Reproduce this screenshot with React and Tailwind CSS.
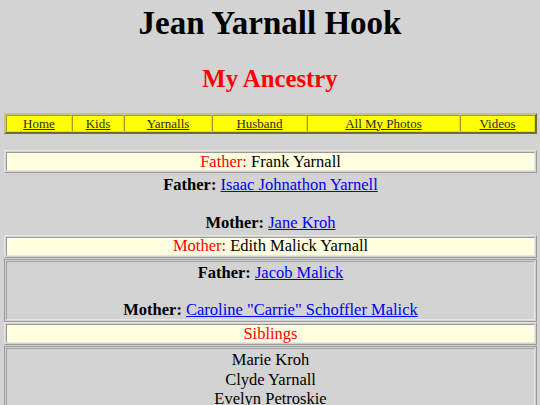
import React from "react";

const serif = { fontFamily: '"Liberation Serif", "Times New Roman", serif' };

function HeadBox({ children, className = "" }) {
  return (
    <div className={"border border-t-[#e6e6e6] border-l-[#e6e6e6] border-b-[#9a9a9a] border-r-[#9a9a9a] p-px " + className}>
      <div className="border border-t-[#9a9a9a] border-l-[#9a9a9a] border-b-[#e6e6e6] border-r-[#e6e6e6] bg-[#ffffe0] h-[19px] flex items-center justify-center text-[16.5px] leading-[18px]">
        {children}
      </div>
    </div>
  );
}

function GrayBox({ children, className = "" }) {
  return (
    <div className={"border border-t-[#9a9a9a] border-l-[#9a9a9a] border-b-[#9a9a9a] border-r-[#9a9a9a] p-px " + className}>
      <div className="border border-t-[#a0a0a0] border-l-[#a0a0a0] border-b-[#e6e6e6] border-r-[#e6e6e6] text-center">
        {children}
      </div>
    </div>
  );
}

const navItems = [
  ["Home", 66],
  ["Kids", 52],
  ["Yarnalls", 88],
  ["Husband", 95],
  ["All My Photos", 153],
  ["Videos", 75],
];

export default function App() {
  return (
    <div className="w-[540px] h-[405px] overflow-hidden bg-[#d3d3d3] text-black" style={serif}>
      <h1 className="pt-[5px] text-center text-[33px] leading-[37px] font-bold">Jean Yarnall Hook</h1>
      <h2 className="mt-[23px] text-center text-[24.75px] leading-[27px] font-bold text-[#ff0000]">My Ancestry</h2>

      <div className="pl-[4px] pr-[3px]">
        <div className="mt-[21px] flex border-2 border-t-[#c4c48a] border-l-[#c4c48a] border-b-[#6e6e3c] border-r-[#6e6e3c]">
          {navItems.map(([label, w], i) => (
            <div
              key={label}
              className={
                "h-[17px] bg-[#ffff00] flex items-center justify-center border border-t-[#9c9c30] border-l-[#9c9c30] border-b-[#e0e000] border-r-[#e0e000]" +
                (i === navItems.length - 1 ? " flex-1" : "")
              }
              style={i === navItems.length - 1 ? undefined : { width: w }}
            >
              <a href="#" className="text-[13px] leading-[14px] text-[#2a2a2a] underline">
                {label}
              </a>
            </div>
          ))}
        </div>

        <HeadBox className="mt-[16px]">
          <span className="text-[#ff0000]">Father:</span>
          <span>&nbsp;Frank Yarnall</span>
        </HeadBox>

        <div className="text-center text-[16.5px] leading-[18.5px] pt-[3px] pb-[2px]">
          <div>
            <b>Father:</b>{" "}
            <a href="#" className="text-[#0000ee] underline">Isaac Johnathon Yarnell</a>
          </div>
          <div className="h-[19.5px]">&nbsp;</div>
          <div>
            <b>Mother:</b>{" "}
            <a href="#" className="text-[#0000ee] underline">Jane Kroh</a>
          </div>
        </div>

        <HeadBox>
          <span className="text-[#ff0000]">Mother:</span>
          <span>&nbsp;Edith Malick Yarnall</span>
        </HeadBox>

        <GrayBox className="mt-px">
          <div className="text-[16.5px] leading-[18.5px] pt-[2px]">
            <div>
              <b>Father:</b>{" "}
              <a href="#" className="text-[#0000ee] underline">Jacob Malick</a>
            </div>
            <div>&nbsp;</div>
            <div>
              <b>Mother:</b>{" "}
              <a href="#" className="text-[#0000ee] underline">Caroline "Carrie" Schoffler Malick</a>
            </div>
          </div>
        </GrayBox>

        <HeadBox>
          <span className="text-[#ff0000]">Siblings</span>
        </HeadBox>

        <GrayBox className="mt-px">
          <div className="text-[16.5px] leading-[19.5px] pt-[1px]">
            <div>Marie Kroh</div>
            <div>Clyde Yarnall</div>
            <div>Evelyn Petroskie</div>
          </div>
        </GrayBox>
      </div>
    </div>
  );
}
